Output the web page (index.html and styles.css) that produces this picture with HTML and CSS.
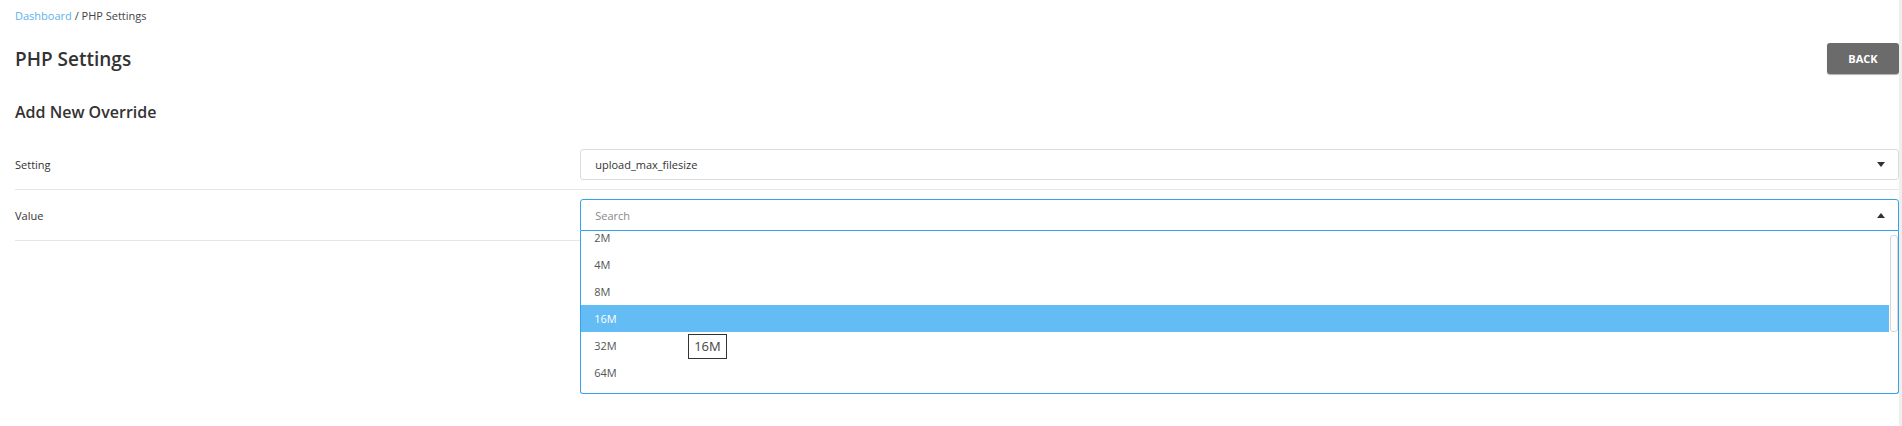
FILE: index.html
```html
<!DOCTYPE html>
<html lang="en">
<head>
<meta charset="utf-8">
<title>PHP Settings</title>
<link rel="stylesheet" href="styles.css">
</head>
<body>
<div class="page">
  <nav class="crumbs"><a class="crumb-link">Dashboard</a> / PHP Settings</nav>
  <header class="head">
    <h1 class="title">PHP Settings</h1>
    <button class="btn-back" type="button">BACK</button>
  </header>
  <h2 class="subtitle">Add New Override</h2>
  <div class="form">
    <div class="row">
      <div class="label">Setting</div>
      <div class="field">
        <div class="select">
          <span class="select-text">upload_max_filesize</span>
          <span class="caret caret-down"></span>
        </div>
      </div>
    </div>
    <div class="row">
      <div class="label">Value</div>
      <div class="field">
        <div class="select select-open">
          <span class="select-text placeholder">Search</span>
          <span class="caret caret-up"></span>
        </div>
        <div class="menu">
          <ul class="options">
            <li class="option">2M</li>
            <li class="option">4M</li>
            <li class="option">8M</li>
            <li class="option option-active">16M</li>
            <li class="option">32M</li>
            <li class="option">64M</li>
          </ul>
          <div class="scroll-thumb"></div>
          <div class="tip">16M</div>
        </div>
      </div>
    </div>
  </div>
</div>
</body>
</html>
```

FILE: styles.css
```css
* { box-sizing: border-box; }

html, body {
  margin: 0;
  padding: 0;
  background: #fff;
}

body {
  font-family: "Open Sans", "Noto Sans", sans-serif;
  color: #333;
  min-height: 426px;
  border-right: 3px solid #efefef;
}

.page {
  padding: 8px 0 0 15px;
}

.crumbs {
  font-size: 11px;
  line-height: 15px;
  color: #444;
}

.crumb-link {
  color: #5cb3ee;
  text-decoration: none;
}

.head {
  display: flex;
  align-items: center;
  justify-content: space-between;
  margin-top: 20px;
  height: 31px;
}

.title {
  margin: 0;
  font-size: 19px;
  font-weight: 600;
  line-height: 26px;
  color: #333;
}

.btn-back {
  width: 72px;
  height: 31px;
  border: none;
  border-radius: 3px;
  background: #6b6b6b;
  color: #fff;
  font-family: inherit;
  font-size: 11px;
  font-weight: 700;
  box-shadow: 0 1px 1px rgba(0, 0, 0, 0.3);
  padding: 0;
}

.subtitle {
  margin: 27px 0 0;
  font-size: 16px;
  font-weight: 600;
  line-height: 22px;
  color: #333;
}

.form {
  margin-top: 17px;
}

.row {
  display: flex;
  align-items: center;
  padding: 9px 0;
  border-bottom: 1px solid #e6e6e6;
}

.label {
  flex: 0 0 30%;
  font-size: 11px;
  color: #333;
}

.field {
  flex: 1 1 auto;
  position: relative;
}

.select {
  display: flex;
  align-items: center;
  justify-content: space-between;
  height: 31px;
  padding: 0 13px 0 14px;
  border: 1px solid #dcdcdc;
  border-radius: 3px;
  font-size: 11px;
  color: #333;
}

.select-open {
  height: 32px;
  border-color: #35a2ec;
  border-radius: 3px 3px 0 0;
  border-bottom-color: #35a2ec;
}

.placeholder {
  color: #888;
}

.caret {
  width: 0;
  height: 0;
  border-left: 4.5px solid transparent;
  border-right: 4.5px solid transparent;
}

.caret-down {
  border-top: 5px solid #333;
}

.caret-up {
  border-bottom: 5px solid #333;
}

.menu {
  position: absolute;
  top: 100%;
  left: 0;
  right: 0;
  height: 163px;
  background: #fff;
  border: 1px solid #35a2ec;
  border-top: none;
  border-radius: 0 0 3px 3px;
  overflow: hidden;
  z-index: 5;
}

.options {
  list-style: none;
  margin: -7px 9px 0 0;
  padding: 0;
}

.option {
  height: 27px;
  line-height: 27px;
  padding-left: 13px;
  font-size: 11px;
  color: #555;
}

.option-active {
  background: #63bcf3;
  color: #fff;
}

.scroll-thumb {
  position: absolute;
  top: 4px;
  right: 0;
  width: 8px;
  height: 97px;
  border: 1px solid #d6d6d6;
  border-radius: 3px;
  background: #fcfcfc;
}

.tip {
  position: absolute;
  left: 107px;
  top: 103px;
  height: 25px;
  padding: 0 5px;
  border: 1px solid #333;
  background: #fff;
  font-size: 13px;
  line-height: 23px;
  color: #444;
}
```
